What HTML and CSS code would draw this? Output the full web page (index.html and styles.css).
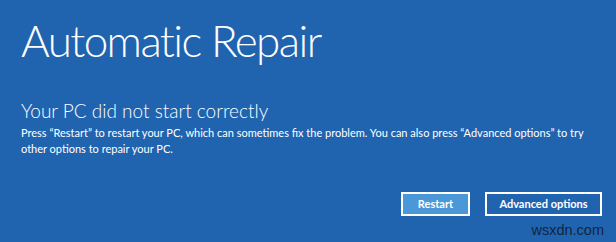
FILE: index.html
```html
<!DOCTYPE html>
<html>
<head>
<meta charset="utf-8">
<link rel="stylesheet" href="styles.css">
</head>
<body>
<main class="screen">
  <h1 class="title">Automatic Repair</h1>
  <h2 class="subtitle">Your PC did not start correctly</h2>
  <p class="message">Press “Restart” to restart your PC, which can sometimes fix the problem. You can also press “Advanced options” to try other options to repair your PC.</p>
  <div class="actions">
    <button class="btn btn-primary">Restart</button>
    <button class="btn btn-secondary">Advanced options</button>
  </div>
  <div class="watermark">wsxdn.com</div>
</main>
</body>
</html>
```
FILE: styles.css
```css
html, body {
  margin: 0;
  padding: 0;
  width: 616px;
  height: 242px;
  overflow: hidden;
  background: #2064b0;
}
.screen {
  box-sizing: border-box;
  width: 616px;
  height: 242px;
  padding: 0 14px 0 21px;
  color: #ffffff;
  font-family: "Lato", "Open Sans", sans-serif;
  display: flex;
  flex-direction: column;
}
.title {
  margin: 12px 0 0 0;
  font-weight: 300;
  font-size: 44px;
  line-height: 56px;
  letter-spacing: -1.6px;
}
.subtitle {
  margin: 31px 0 0 0;
  font-weight: 300;
  font-size: 19px;
  line-height: 24px;
}
.message {
  margin: 2px 0 0 0;
  font-size: 11px;
  line-height: 16px;
  font-weight: 400;
}
.actions {
  display: flex;
  justify-content: flex-end;
  gap: 15px;
  margin-top: 35px;
}
.btn {
  box-sizing: border-box;
  height: 24px;
  border: 2px solid #ffffff;
  background: #2064b0;
  color: #ffffff;
  font-family: "Lato", "Open Sans", sans-serif;
  font-weight: 700;
  font-size: 11px;
  line-height: 18px;
  padding: 0;
  margin: 0;
}
.btn-primary {
  width: 69px;
  background: #4b98d8;
}
.btn-secondary {
  width: 117px;
}
.watermark {
  align-self: flex-end;
  margin-top: 6px;
  margin-right: -2px;
  font-family: "Liberation Sans", Arial, sans-serif;
  font-size: 14.5px;
  line-height: 16px;
  color: #13243d;
}
```
